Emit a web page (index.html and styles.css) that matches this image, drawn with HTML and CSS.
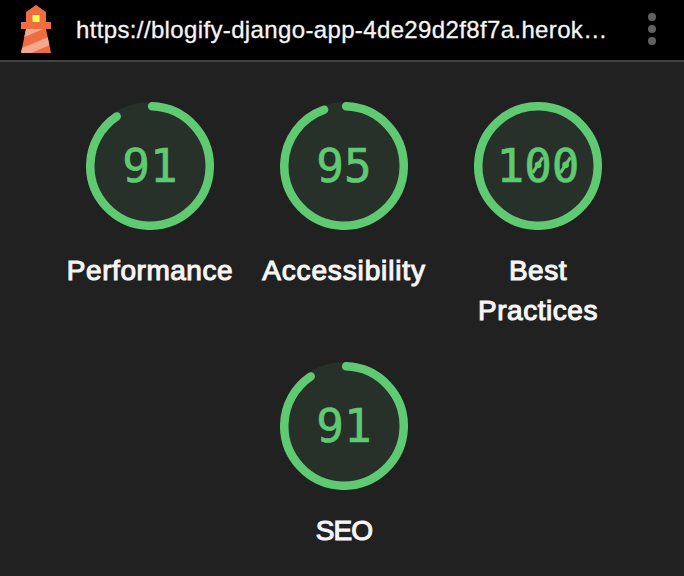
FILE: index.html
```html
<!DOCTYPE html>
<html lang="en">
<head>
<meta charset="utf-8">
<title>Lighthouse Report</title>
<link rel="stylesheet" href="styles.css">
</head>
<body>
<header class="topbar">
  <svg class="logo" viewBox="0 0 48 48" aria-hidden="true">
    <path fill="#ee6e41" d="m14 7 10-7 10 7v10h5v7h-5l5 24H9l5-24H9v-7h5V7Z"/>
    <path fill="#f4a88d" d="M31.561 24H14l-1.689 8.105L31.561 24ZM18.983 48H9l1.022-4.907L35.723 32.27l1.663 7.98L18.983 48Z"/>
    <path fill="#ff5" d="M20.5 10h7v7h-7z"/>
  </svg>
  <div class="url">https://blogify-django-app-4de29d2f8f7a.herok…</div>
  <svg class="menu" viewBox="0 0 48 48" aria-hidden="true">
    <circle cx="24" cy="12" r="4"/><circle cx="24" cy="24" r="4"/><circle cx="24" cy="36" r="4"/>
  </svg>
</header>
<main class="scores">
  <section class="gauge">
    <div class="dial">
      <svg class="ring" viewBox="0 0 120 120"><circle class="base" cx="60" cy="60" r="60"/><circle class="arc" cx="60" cy="60" r="56" stroke-dasharray="316.19 351.86"/></svg>
      <span class="value">91</span>
    </div>
    <div class="label">Performance</div>
  </section>
  <section class="gauge">
    <div class="dial">
      <svg class="ring" viewBox="0 0 120 120"><circle class="base" cx="60" cy="60" r="60"/><circle class="arc" cx="60" cy="60" r="56" stroke-dasharray="330.27 351.86"/></svg>
      <span class="value">95</span>
    </div>
    <div class="label label-wide">Accessibility</div>
  </section>
  <section class="gauge">
    <div class="dial">
      <svg class="ring" viewBox="0 0 120 120"><circle class="base" cx="60" cy="60" r="60"/><circle class="arc" cx="60" cy="60" r="56"/><path class="slash" d="M55 66.5 64.5 52M81 66.5 90.5 52"/></svg>
      <span class="value">100</span>
    </div>
    <div class="label">Best<br>Practices</div>
  </section>
  <section class="gauge">
    <div class="dial">
      <svg class="ring" viewBox="0 0 120 120"><circle class="base" cx="60" cy="60" r="60"/><circle class="arc" cx="60" cy="60" r="56" stroke-dasharray="316.19 351.86"/></svg>
      <span class="value">91</span>
    </div>
    <div class="label label-tight">SEO</div>
  </section>
</main>
</body>
</html>
```
FILE: styles.css
```css
* { box-sizing: border-box; }
body {
  margin: 0;
  height: 576px;
  background: #212121;
  color: #f5f5f5;
  font-family: "Liberation Sans", Arial, sans-serif;
}
.topbar {
  display: flex;
  align-items: center;
  height: 62px;
  padding-left: 12px;
  background: #000;
  border-bottom: 2px solid #424242;
}
.logo { width: 48px; height: 48px; margin-top: -2px; }
.url {
  width: 552px;
  margin-left: 16px;
  font-size: 24px;
  line-height: 40px;
  letter-spacing: 0.36px;
  white-space: nowrap;
  -webkit-text-stroke: 0.3px #f5f5f5;
}
.menu { width: 48px; height: 48px; fill: #616161; margin-top: -2px; }
.scores {
  display: flex;
  flex-wrap: wrap;
  justify-content: center;
  row-gap: 32px;
  width: 582px;
  padding-top: 40px;
  margin-left: 53px;
}
.gauge {
  display: flex;
  flex-direction: column;
  align-items: center;
  width: 194px;
}
.dial {
  display: grid;
  place-items: center;
  width: 128px;
  height: 128px;
}
.ring, .value { grid-area: 1 / 1; }
.ring { width: 128px; height: 128px; }
.base { fill: #28302a; }
.arc {
  fill: none;
  stroke: #5fca72;
  stroke-width: 8;
  stroke-linecap: round;
  transform: rotate(-87.95deg);
  transform-origin: 60px 60px;
}
.slash { stroke: #5fca72; stroke-width: 3; }
.value {
  color: #5fca72;
  font: 46px/1 "DejaVu Sans Mono", monospace;
  -webkit-text-stroke: 0.6px #5fca72;
}
.label {
  margin-top: 21px;
  margin-bottom: -1px;
  font-size: 28px;
  line-height: 40px;
  letter-spacing: 0.55px;
  text-align: center;
  -webkit-text-stroke: 1.1px #f5f5f5;
}
.label-wide { letter-spacing: 0.85px; }
.label-tight { letter-spacing: -0.9px; }
```
